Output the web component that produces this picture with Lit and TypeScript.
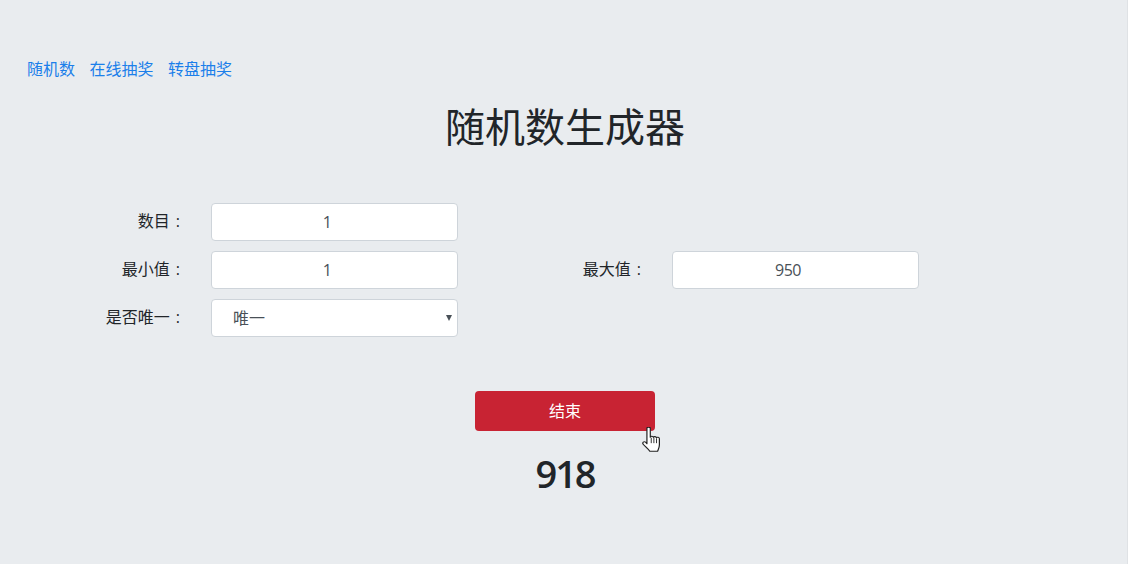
import { LitElement, html, css } from "lit";
import { customElement } from "lit/decorators.js";

@customElement("field-label")
export class FieldLabel extends LitElement {
  static properties = { text: {}, wide: { type: Boolean } };
  declare text: string;
  declare wide: boolean;
  static styles = css`
    :host {
      display: flex;
      justify-content: flex-end;
      width: 183px;
      margin: 0 28px 2px 0;
      line-height: 24px;
    }
    :host([wide]) { width: 186px; }
    .colon { margin: 0 3px 0 6px; }
  `;
  render() {
    return html`<span>${this.text}</span><span class="colon">:</span>`;
  }
}

@customElement("app-root")
export class AppRoot extends LitElement {
  static styles = css`
    :host {
      display: block;
      height: 564px;
      box-sizing: border-box;
      overflow: hidden;
      position: relative;
      background: #e9ecef;
      border-right: 1px solid #dfe2e5;
      color: #212529;
      font-family: "Open Sans", "Noto Sans CJK SC", sans-serif;
      font-size: 16px;
      padding-top: 57px;
    }
    .links {
      display: flex;
      gap: 14.5px;
      padding-left: 27px;
      height: 24px;
      line-height: 24px;
    }
    .links a {
      color: #1b7fea;
      text-decoration: none;
    }
    .center {
      width: 1130px;
      display: flex;
      flex-direction: column;
      align-items: center;
    }
    h1 {
      margin: 16px 0 0;
      font-size: 40px;
      font-weight: 400;
      line-height: 60px;
    }
    .form {
      align-self: flex-start;
      margin-top: 46px;
      display: flex;
      flex-direction: column;
      gap: 10px;
    }
    .row {
      display: flex;
      align-items: center;
    }
    input, select {
      box-sizing: border-box;
      width: 247px;
      height: 38px;
      background: #fff;
      border: 1px solid #ced4da;
      border-radius: 4px;
      color: #495057;
      font: inherit;
      font-size: 16px;
      letter-spacing: -0.5px;
      text-align: center;
      outline: none;
      margin: 0;
      padding: 0 15px 0 0;
    }
    .sel {
      position: relative;
      width: 247px;
      height: 38px;
    }
    select {
      appearance: none;
      -webkit-appearance: none;
      text-align: left;
      letter-spacing: 0;
      padding: 0 0 0 21px;
    }
    .arrow {
      position: absolute;
      right: 6px;
      top: 16px;
      width: 0;
      height: 0;
      border-left: 3px solid transparent;
      border-right: 3px solid transparent;
      border-top: 6px solid #495057;
    }
    button {
      margin-top: 54px;
      width: 180px;
      height: 40px;
      background: #c82333;
      border: none;
      border-radius: 4px;
      color: #fff;
      font: inherit;
      padding: 0 0 2px;
    }
    .result {
      margin-top: 18px;
      font-size: 38px;
      letter-spacing: -2px;
      font-weight: 600;
      line-height: 48px;
    }
    .cursor {
      position: absolute;
      left: 642px;
      top: 427px;
      width: 18px;
      height: 25px;
    }
  `;

  render() {
    return html`
      <nav class="links">
        <a href="#">随机数</a><a href="#">在线抽奖</a><a href="#">转盘抽奖</a>
      </nav>
      <div class="center">
        <h1>随机数生成器</h1>
        <div class="form">
          <div class="row">
            <field-label text="数目"></field-label>
            <input value="1" />
          </div>
          <div class="row">
            <field-label text="最小值"></field-label>
            <input value="1" />
            <field-label wide text="最大值"></field-label>
            <input value="950" />
          </div>
          <div class="row">
            <field-label text="是否唯一"></field-label>
            <div class="sel">
              <select><option>唯一</option></select>
              <span class="arrow"></span>
            </div>
          </div>
        </div>
        <button>结束</button>
        <div class="result">918</div>
      </div>
      <svg class="cursor" viewBox="0.5 1 15 23.2" preserveAspectRatio="none">
        <path
          d="M4.6 2.2C4.6 .8 7.4 .8 7.4 2.2V10.5C7.8 9.3 9.8 9.3 10 10.6C10.4 9.6 12.3 9.7 12.5 11C13 10.2 15 10.4 15 11.8V17.5C15 20.5 14 22 13.5 23.5H7C6 21.5 2.6 18.6 1.5 17C0.5 15.5 2 14 3.5 15L4.6 16.5Z"
          fill="#fff"
          stroke="#222"
          stroke-width="1"
          stroke-linejoin="round"
        />
        <path d="M8.2 11V16M10.4 11V16M12.6 11.5V16" stroke="#222" stroke-width=".8" fill="none" />
      </svg>
    `;
  }
}
